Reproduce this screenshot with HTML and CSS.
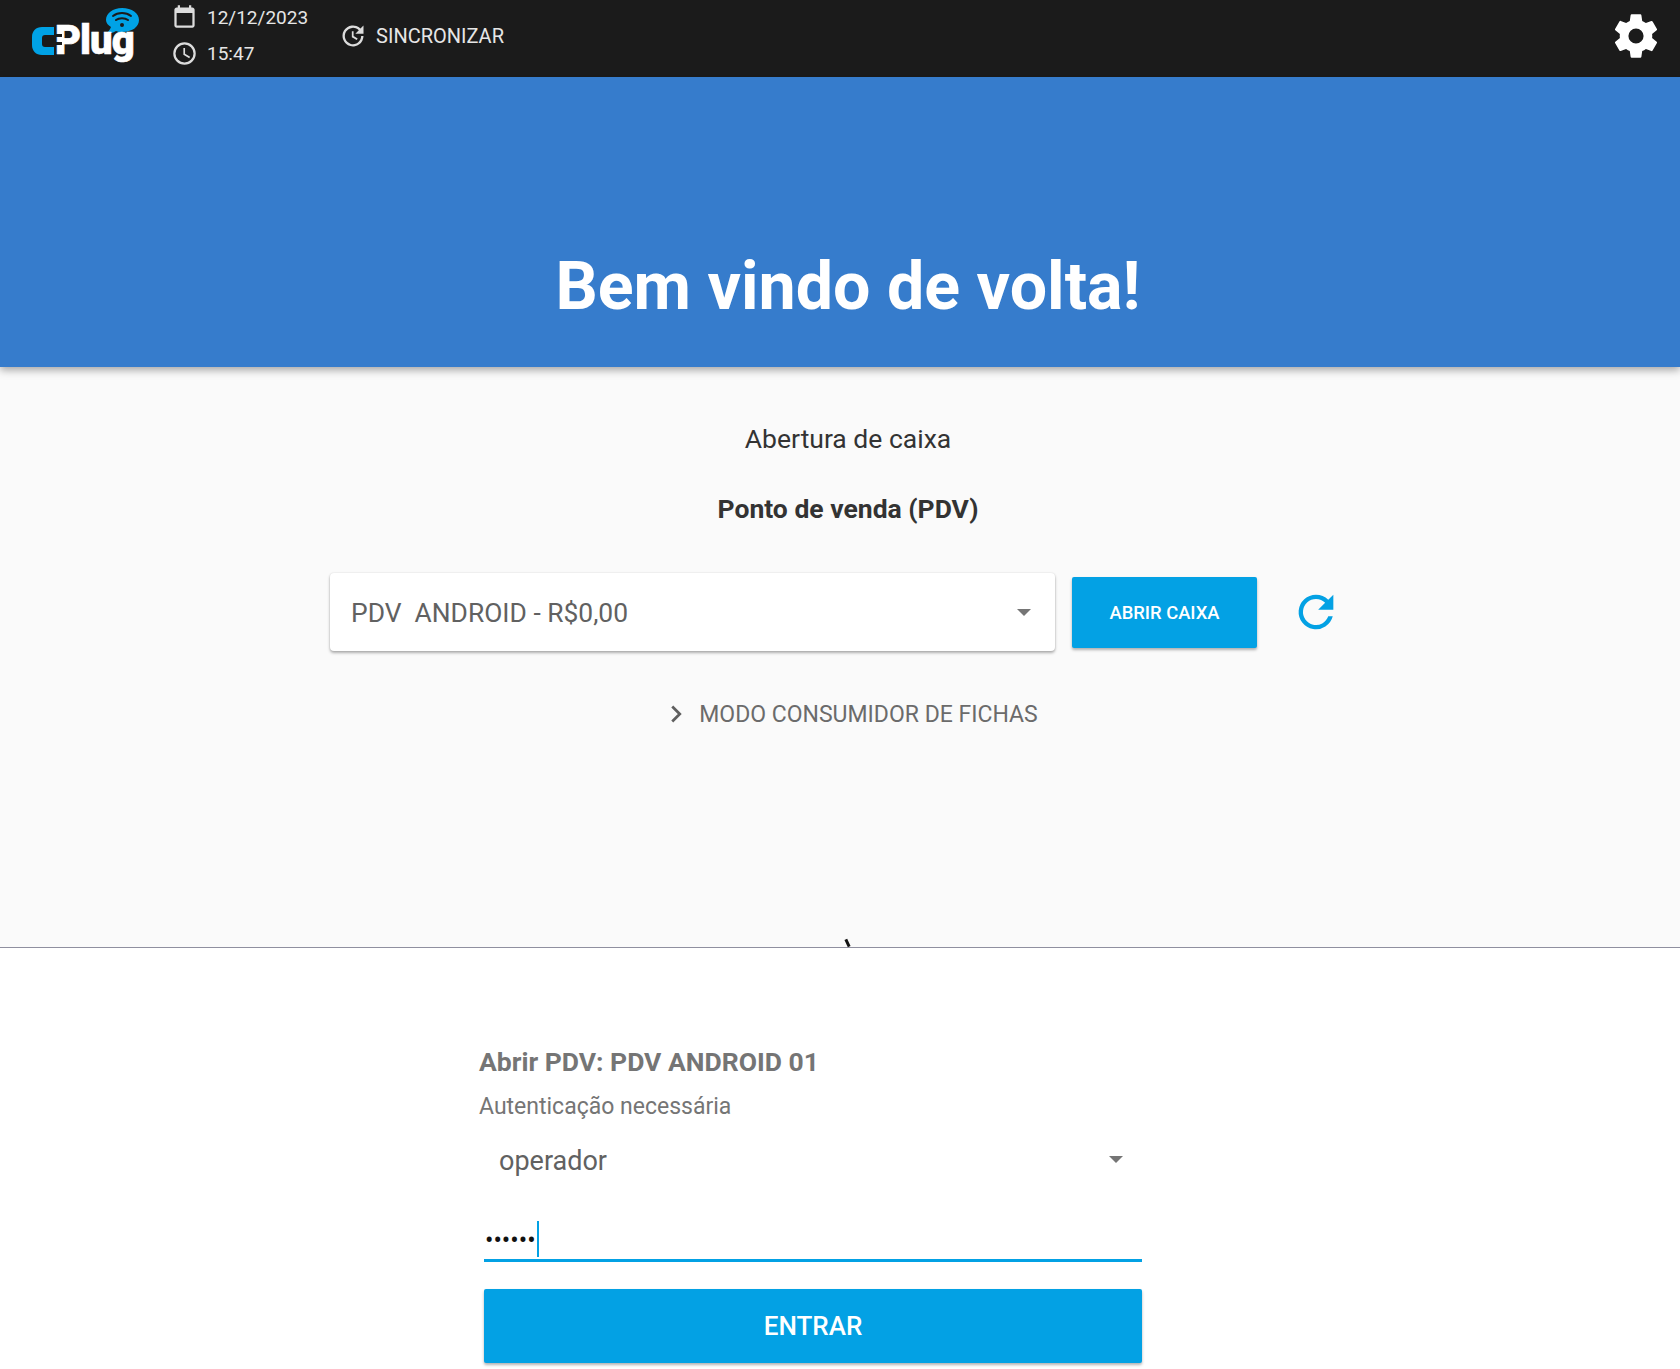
FILE: index.html
```html
<!DOCTYPE html>
<html lang="pt-BR">
<head>
    <meta charset="UTF-8">
    <title>CPlug PDV</title>
    <meta name="viewport" content="width=device-width, initial-scale=1"/>
    <link rel="stylesheet" href="styles.css">
</head>
<body>
<header class="topbar">
    <div class="logo">
        <svg width="112" height="62" viewBox="30 4 112 62">
            <path d="M122 7c10 0 17 5 17 12s-7 12-17 12c-2 0-4 0-6-1-3 2-7 3-11 3 3-2 5-4 6-7-3-2-5-4-5-7 0-7 7-12 16-12z" fill="#00a2e6"/>
            <g fill="none" stroke="#1b1b1b" stroke-width="2" stroke-linecap="round">
                <path d="M113 15c5-4 13-4 18 0"/>
                <path d="M116 19c3-2.500 9-2.500 12 0"/>
            </g>
            <circle cx="122" cy="24" r="2" fill="#1b1b1b"/>
            <path d="M54 26H42c-6 0-10 4-10 10v8c0 6 4 10 10 10h12v-8h-9c-2 0-3-1-3-3v-6c0-2 1-3 3-3h9z" fill="#00a2e6"/>
            <text x="55" y="53" class="logo-text">Plug</text>
            <path d="M54 33h8v3h-8zM54 41h8v3h-8z" fill="#1b1b1b"/>
        </svg>
    </div>
    <div class="datetime">
        <div class="datetime-row">
            <svg class="icon" width="27" height="27" viewBox="0 0 24 24"><path d="M19 3h-1V1h-2v2H8V1H6v2H5c-1.100 0-2 .9-2 2v14c0 1.100.9 2 2 2h14c1.100 0 2-.9 2-2V5c0-1.100-.9-2-2-2zm0 16H5V8h14z" fill="#dcdcdc"/></svg>
            <span>12/12/2023</span>
        </div>
        <div class="datetime-row">
            <svg class="icon" width="27" height="27" viewBox="0 0 24 24"><path d="M12 2a10 10 0 1 0 0 20 10 10 0 0 0 0-20zm0 18a8 8 0 1 1 0-16 8 8 0 0 1 0 16zm.5-13H11v6l5.200 3.200.8-1.300-4.500-2.700z" fill="#dcdcdc"/></svg>
            <span>15:47</span>
        </div>
    </div>
    <a class="sync" href="#">
        <svg width="28" height="28" viewBox="0 0 24 24"><path d="M11 8v5l4.200 2.500.8-1.300-3.500-2.100V8zm10 2V3l-2.600 2.600A9 9 0 1 0 21 12h-2a7 7 0 1 1-2-4.900L14 10z" fill="#dcdcdc"/></svg>
        <span>SINCRONIZAR</span>
    </a>
    <svg class="gear" width="52" height="52" viewBox="0 0 24 24"><path d="M19.430 12.980c.04-.32.070-.64.070-.98s-.03-.66-.07-.98l2.110-1.650c.19-.15.240-.42.120-.64l-2-3.460c-.12-.22-.39-.3-.61-.22l-2.490 1c-.52-.4-1.080-.73-1.690-.98l-.38-2.650A.49.490 0 0 0 14 2h-4c-.25 0-.46.180-.49.420l-.38 2.650c-.61.250-1.170.59-1.690.98l-2.490-1c-.23-.09-.49 0-.61.220l-2 3.460c-.13.220-.07.490.12.640l2.110 1.650c-.04.320-.07.650-.07.980s.03.660.07.980l-2.110 1.650c-.19.150-.24.420-.12.640l2 3.460c.12.220.39.300.61.220l2.490-1c.52.400 1.080.730 1.690.980l.38 2.650c.03.240.240.420.490.420h4c.25 0 .46-.180.490-.420l.38-2.650c.61-.250 1.170-.590 1.690-.980l2.490 1c.23.090.49 0 .61-.220l2-3.460c.12-.220.070-.490-.12-.640zM12 15.500a3.500 3.500 0 1 1 0-7 3.500 3.500 0 0 1 0 7z" fill="#fff"/></svg>
</header>

<section class="hero">
    <h1>Bem vindo de volta!</h1>
</section>

<main class="content">
    <p class="subtitle">Abertura de caixa</p>
    <p class="pdv-title">Ponto de venda (PDV)</p>
    <div class="pdv-row">
        <div class="select-card">
            <span>PDV&nbsp; ANDROID - R$0,00</span>
            <i class="caret"></i>
        </div>
        <button class="btn-open">ABRIR CAIXA</button>
        <svg class="refresh" width="52" height="52" viewBox="0 0 24 24"><path d="M17.650 6.350A7.960 7.960 0 0 0 12 4a8 8 0 1 0 7.730 10h-2.080A6 6 0 1 1 12 6c1.660 0 3.140.69 4.220 1.780L13 11h7V4z" fill="#03a1e4"/></svg>
    </div>
    <div class="token-mode">
        <svg width="30" height="30" viewBox="0 0 24 24"><path d="M9 6l6 6-6 6" fill="none" stroke="#5f5f5f" stroke-width="2.200"/></svg>
        <span>MODO CONSUMIDOR DE FICHAS</span>
    </div>
    <i class="tick"></i>
</main>

<section class="sheet">
    <div class="auth">
        <h2>Abrir PDV: PDV ANDROID 01</h2>
        <p class="auth-note">Autenticação necessária</p>
        <div class="auth-fields">
            <div class="operator">
                <span>operador</span>
                <i class="caret"></i>
            </div>
            <div class="password">
                <span class="dots">••••••</span><i class="cursor"></i>
            </div>
            <button class="btn-login">ENTRAR</button>
        </div>
    </div>
</section>
</body>
</html>
```

FILE: styles.css
```css
*{
    box-sizing: border-box;
}

html, body{
    height: 100%;
}

body{
    margin: 0;
    display: flex;
    flex-direction: column;
    overflow: hidden;
    background: #fff;
    font: 400 16px Roboto, sans-serif;
}

.topbar{
    height: 77px;
    flex: none;
    display: flex;
    align-items: center;
    padding: 0 18px 6px 30px;
    background: #1b1b1b;
    color: #e6e6e6;
    font-size: 20px;
}

.logo{
    width: 141px;
    display: flex;
    align-items: center;
}
.logo-text{
    fill: #fff;
    stroke: #fff;
    stroke-width: .6px;
    font: 900 40px Roboto, sans-serif;
    letter-spacing: -1px;
}

.datetime{
    display: flex;
    flex-direction: column;
    gap: 11px;
}
.datetime-row{
    display: flex;
    align-items: center;
    gap: 9px;
    height: 25px;
    font-size: 19px;
}

.sync{
    display: flex;
    align-items: center;
    gap: 9px;
    margin-left: 31px;
    color: inherit;
    text-decoration: none;
}

.gear{
    margin-left: auto;
}

.hero{
    height: 290px;
    flex: none;
    display: flex;
    align-items: flex-end;
    justify-content: center;
    padding: 0 0 43px 16px;
    background: #367ccc;
    box-shadow: 0 3px 8px rgba(0, 0, 0, .35);
    position: relative;
    z-index: 1;
}
.hero h1{
    margin: 0;
    color: #fff;
    font-size: 66.300px;
    font-weight: 700;
    line-height: 75px;
}

.content{
    height: 581px;
    flex: none;
    display: flex;
    flex-direction: column;
    align-items: center;
    padding: 56px 0 0 16px;
    background: #fafafa;
    border-bottom: 1px solid #8f8f9f;
    color: #333;
    position: relative;
}
.subtitle{
    margin: 0;
    font-size: 26.500px;
    line-height: 32px;
}
.pdv-title{
    margin: 38px 0 0;
    font-size: 26.500px;
    font-weight: 700;
    line-height: 32px;
}

.pdv-row{
    display: flex;
    align-items: center;
    margin-top: 48px;
    margin-left: -24px;
}
.select-card{
    width: 725px;
    height: 78px;
    display: flex;
    align-items: center;
    justify-content: space-between;
    padding: 2px 24px 0 21px;
    background: #fff;
    border-radius: 4px;
    box-shadow: 0 2px 3px rgba(0, 0, 0, .3), 0 0 2px rgba(0, 0, 0, .12);
    color: #616161;
    font-size: 26.400px;
}
.select-card .caret{
    margin-bottom: 2px;
}
.caret{
    width: 0;
    height: 0;
    border-left: 7px solid transparent;
    border-right: 7px solid transparent;
    border-top: 7px solid #757575;
}
.btn-open{
    width: 185px;
    height: 71px;
    margin-left: 17px;
    border: 0;
    border-radius: 2px;
    background: #03a1e4;
    box-shadow: 0 2px 3px rgba(0, 0, 0, .3);
    color: #fff;
    font: 500 18.400px Roboto, sans-serif;
}
.refresh{
    margin-left: 33px;
}

.token-mode{
    display: flex;
    align-items: center;
    gap: 8px;
    margin-top: 48px;
    margin-left: 3px;
    color: #6b6b6b;
    font-size: 23px;
}

.tick{
    position: absolute;
    left: 846px;
    bottom: 0;
    width: 3px;
    height: 8px;
    background: #111;
    transform: rotate(-25deg);
}

.sheet{
    flex: 1;
    padding: 96px 0 0 479px;
    background: #fff;
    overflow: hidden;
}
.auth{
    width: 663px;
}
.auth h2{
    margin: 0;
    color: #757575;
    font-size: 26.500px;
    font-weight: 700;
    line-height: 36px;
}
.auth-note{
    margin: 11px 0 0;
    color: #757575;
    font-size: 23px;
    line-height: 32px;
}
.auth-fields{
    padding-left: 5px;
}
.operator{
    display: flex;
    align-items: center;
    justify-content: space-between;
    height: 40px;
    margin-top: 18px;
    padding: 0 19px 0 15px;
    color: #616161;
    font-size: 27px;
}
.operator .caret{
    margin-bottom: 4px;
}
.password{
    display: flex;
    align-items: center;
    height: 44px;
    margin-top: 37px;
    border-bottom: 3px solid #03a1e4;
}
.dots{
    margin: 4px 0 0 1px;
    color: #111;
    font-size: 25px;
}
.cursor{
    width: 2px;
    height: 36px;
    margin-left: 1px;
    background: #03a1e4;
}
.btn-login{
    width: 100%;
    height: 74px;
    margin-top: 27px;
    border: 0;
    border-radius: 2px;
    background: #03a1e4;
    box-shadow: 0 2px 3px rgba(0, 0, 0, .3);
    color: #fff;
    font: 500 26px Roboto, sans-serif;
}
```
